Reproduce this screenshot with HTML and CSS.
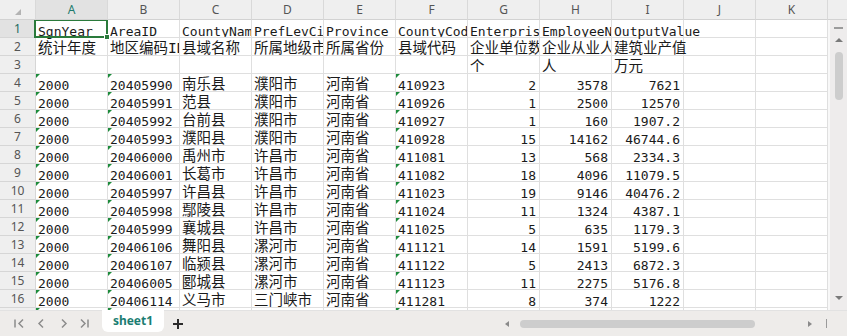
FILE: index.html
```html
<!DOCTYPE html>
<html>
<head>
  <meta charset="utf-8">
  <title>sheet1</title>
  <link rel="stylesheet" href="styles.css">
</head>
<body>
  <div class="book">
    <div class="colheads">
      <div class="corner"></div>
      <div class="ch sel">A</div><div class="ch">B</div><div class="ch">C</div><div class="ch">D</div>
      <div class="ch">E</div><div class="ch">F</div><div class="ch">G</div><div class="ch">H</div>
      <div class="ch">I</div><div class="ch">J</div><div class="ch">K</div>
      <div class="ch-end"></div>
    </div>

    <div class="body">
      <div class="sheet">
        <div class="row">
          <div class="rh sel">1</div>
          <div class="c cur">SgnYear<span class="handle"></span></div><div class="c">AreaID</div><div class="c">CountyName</div>
          <div class="c">PrefLevCity</div><div class="c">Province</div><div class="c">CountyCode</div>
          <div class="c">EnterpriseNum</div><div class="c">EmployeeNum</div><div class="c ov">OutputValue</div>
          <div class="c"></div><div class="c"></div>
        </div>
        <div class="row">
          <div class="rh">2</div>
          <div class="c zh">统计年度</div><div class="c zh">地区编码ID</div><div class="c zh">县域名称</div>
          <div class="c zh">所属地级市</div><div class="c zh">所属省份</div><div class="c zh">县域代码</div>
          <div class="c zh">企业单位数</div><div class="c zh">企业从业人数</div><div class="c zh ov">建筑业产值</div>
          <div class="c"></div><div class="c"></div>
        </div>
        <div class="row">
          <div class="rh">3</div>
          <div class="c"></div><div class="c"></div><div class="c"></div><div class="c"></div><div class="c"></div><div class="c"></div>
          <div class="c zh">个</div><div class="c zh">人</div><div class="c zh">万元</div>
          <div class="c"></div><div class="c"></div>
        </div>
        <div class="row">
          <div class="rh">4</div>
          <div class="c t">2000</div><div class="c t">20405990</div><div class="c zh">南乐县</div><div class="c zh">濮阳市</div>
          <div class="c zh">河南省</div><div class="c t">410923</div><div class="c n">2</div><div class="c n">3578</div>
          <div class="c n">7621</div><div class="c"></div><div class="c"></div>
        </div>
        <div class="row">
          <div class="rh">5</div>
          <div class="c t">2000</div><div class="c t">20405991</div><div class="c zh">范县</div><div class="c zh">濮阳市</div>
          <div class="c zh">河南省</div><div class="c t">410926</div><div class="c n">1</div><div class="c n">2500</div>
          <div class="c n">12570</div><div class="c"></div><div class="c"></div>
        </div>
        <div class="row">
          <div class="rh">6</div>
          <div class="c t">2000</div><div class="c t">20405992</div><div class="c zh">台前县</div><div class="c zh">濮阳市</div>
          <div class="c zh">河南省</div><div class="c t">410927</div><div class="c n">1</div><div class="c n">160</div>
          <div class="c n">1907.2</div><div class="c"></div><div class="c"></div>
        </div>
        <div class="row">
          <div class="rh">7</div>
          <div class="c t">2000</div><div class="c t">20405993</div><div class="c zh">濮阳县</div><div class="c zh">濮阳市</div>
          <div class="c zh">河南省</div><div class="c t">410928</div><div class="c n">15</div><div class="c n">14162</div>
          <div class="c n">46744.6</div><div class="c"></div><div class="c"></div>
        </div>
        <div class="row">
          <div class="rh">8</div>
          <div class="c t">2000</div><div class="c t">20406000</div><div class="c zh">禹州市</div><div class="c zh">许昌市</div>
          <div class="c zh">河南省</div><div class="c t">411081</div><div class="c n">13</div><div class="c n">568</div>
          <div class="c n">2334.3</div><div class="c"></div><div class="c"></div>
        </div>
        <div class="row">
          <div class="rh">9</div>
          <div class="c t">2000</div><div class="c t">20406001</div><div class="c zh">长葛市</div><div class="c zh">许昌市</div>
          <div class="c zh">河南省</div><div class="c t">411082</div><div class="c n">18</div><div class="c n">4096</div>
          <div class="c n">11079.5</div><div class="c"></div><div class="c"></div>
        </div>
        <div class="row">
          <div class="rh">10</div>
          <div class="c t">2000</div><div class="c t">20405997</div><div class="c zh">许昌县</div><div class="c zh">许昌市</div>
          <div class="c zh">河南省</div><div class="c t">411023</div><div class="c n">19</div><div class="c n">9146</div>
          <div class="c n">40476.2</div><div class="c"></div><div class="c"></div>
        </div>
        <div class="row">
          <div class="rh">11</div>
          <div class="c t">2000</div><div class="c t">20405998</div><div class="c zh">鄢陵县</div><div class="c zh">许昌市</div>
          <div class="c zh">河南省</div><div class="c t">411024</div><div class="c n">11</div><div class="c n">1324</div>
          <div class="c n">4387.1</div><div class="c"></div><div class="c"></div>
        </div>
        <div class="row">
          <div class="rh">12</div>
          <div class="c t">2000</div><div class="c t">20405999</div><div class="c zh">襄城县</div><div class="c zh">许昌市</div>
          <div class="c zh">河南省</div><div class="c t">411025</div><div class="c n">5</div><div class="c n">635</div>
          <div class="c n">1179.3</div><div class="c"></div><div class="c"></div>
        </div>
        <div class="row">
          <div class="rh">13</div>
          <div class="c t">2000</div><div class="c t">20406106</div><div class="c zh">舞阳县</div><div class="c zh">漯河市</div>
          <div class="c zh">河南省</div><div class="c t">411121</div><div class="c n">14</div><div class="c n">1591</div>
          <div class="c n">5199.6</div><div class="c"></div><div class="c"></div>
        </div>
        <div class="row">
          <div class="rh">14</div>
          <div class="c t">2000</div><div class="c t">20406107</div><div class="c zh">临颍县</div><div class="c zh">漯河市</div>
          <div class="c zh">河南省</div><div class="c t">411122</div><div class="c n">5</div><div class="c n">2413</div>
          <div class="c n">6872.3</div><div class="c"></div><div class="c"></div>
        </div>
        <div class="row">
          <div class="rh">15</div>
          <div class="c t">2000</div><div class="c t">20406005</div><div class="c zh">郾城县</div><div class="c zh">漯河市</div>
          <div class="c zh">河南省</div><div class="c t">411123</div><div class="c n">11</div><div class="c n">2275</div>
          <div class="c n">5176.8</div><div class="c"></div><div class="c"></div>
        </div>
        <div class="row">
          <div class="rh">16</div>
          <div class="c t">2000</div><div class="c t">20406114</div><div class="c zh">义马市</div><div class="c zh">三门峡市</div>
          <div class="c zh">河南省</div><div class="c t">411281</div><div class="c n">8</div><div class="c n">374</div>
          <div class="c n">1222</div><div class="c"></div><div class="c"></div>
        </div>
        <div class="row">
          <div class="rh">17</div>
          <div class="c t"></div><div class="c t"></div><div class="c"></div><div class="c"></div>
          <div class="c"></div><div class="c t"></div><div class="c"></div><div class="c"></div>
          <div class="c"></div><div class="c"></div><div class="c"></div>
        </div>
      </div>

      <div class="vscroll">
        <span class="split"></span>
        <span class="arrow-up"></span>
        <span class="vthumb"></span>
        <span class="arrow-down"></span>
      </div>
    </div>

    <div class="tabbar">
      <svg class="nav" width="100" height="25" viewBox="0 0 100 25">
        <g fill="none" stroke="#8c8c8c" stroke-width="1.5">
          <path d="M15 8.5V16.5M23 8.5L19 12.5L23 16.5"/>
          <path d="M43 8.5L39 12.5L43 16.5"/>
          <path d="M62 8.5L66 12.5L62 16.5"/>
          <path d="M81 8.5L85 12.5L81 16.5M88 8.5V16.5"/>
        </g>
      </svg>
      <div class="tab">sheet1</div>
      <svg class="add" width="12" height="12" viewBox="0 0 12 12">
        <path d="M6 1V11M1 6H11" stroke="#2b2b2b" stroke-width="2"/>
      </svg>
      <div class="hscroll">
        <span class="arrow-left"></span>
        <span class="hthumb"></span>
        <span class="arrow-right"></span>
        <span class="bar"></span>
      </div>
    </div>
  </div>
</body>
</html>
```

FILE: styles.css
```css
body {
  margin: 0;
  font-family: "Noto Sans", sans-serif;
  background: #fff;
  overflow: hidden;
}

.book {
  width: 847px;
  height: 336px;
  display: flex;
  flex-direction: column;
}

/* column letters */
.colheads {
  display: grid;
  grid-template-columns: 36px repeat(11, 72px) 19px;
  height: 20px;
  background: #efefef;
}

.colheads > div {
  box-sizing: border-box;
  border-right: 1px solid #d9d9d9;
  border-bottom: 1px solid #d2d2d2;
  text-align: center;
  font-size: 12px;
  line-height: 19px;
  color: #555;
}

.colheads .ch-end {
  border-right: none;
}

.colheads .sel {
  background: #e2e2e2;
  color: #1d7b6c;
}

.corner {
  position: relative;
}

.corner::after {
  content: "";
  position: absolute;
  left: 15px;
  top: 9px;
  border-left: 6px solid transparent;
  border-bottom: 6px solid #b3b3b3;
}

/* grid */
.body {
  display: flex;
  height: 290px;
}

.sheet {
  width: 828px;
  overflow: hidden;
}

.row {
  display: grid;
  grid-template-columns: 36px repeat(11, 72px);
  height: 18px;
}

.row > div {
  box-sizing: border-box;
  height: 18px;
  border-right: 1px solid #dfdfdf;
  border-bottom: 1px solid #dfdfdf;
}

.rh {
  background: #efefef;
  text-align: center;
  font-size: 12px;
  line-height: 17px;
  color: #555;
}

.row > .rh {
  border-color: #d6d6d6;
}

.rh.sel {
  background: #e2e2e2;
  color: #1d6b60;
}

.c {
  position: relative;
  overflow: hidden;
  white-space: nowrap;
  padding: 3px 3px 0 2px;
  font-family: "DejaVu Sans Mono", "Noto Sans CJK SC", monospace;
  font-size: 13px;
  line-height: 18px;
  color: #1a1a1a;
}

.c.zh {
  font-size: 14.5px;
  padding-top: 1px;
}

.c.n {
  text-align: right;
}

.c.ov,
.c.cur {
  overflow: visible;
}

/* number stored as text */
.c.t::before {
  content: "";
  position: absolute;
  left: 0;
  top: 0;
  border-top: 4px solid #1c8b3b;
  border-right: 4px solid transparent;
}

/* active cell */
.c.cur::after {
  content: "";
  position: absolute;
  left: -2px;
  top: -1px;
  right: -1px;
  bottom: -1px;
  border: 2px solid #2a7a3b;
}

.handle {
  position: absolute;
  right: -3px;
  bottom: -3px;
  width: 6px;
  height: 6px;
  box-sizing: border-box;
  background: #2a7a3b;
  border: 1px solid #fff;
  z-index: 1;
}

/* vertical scrollbar */
.vscroll {
  width: 19px;
  box-sizing: border-box;
  border-left: 2px solid #f8f8f8;
  background: #eeecec;
  display: flex;
  flex-direction: column;
  align-items: center;
  padding-top: 7px;
}

.split {
  width: 9px;
  height: 2px;
  background: #9b9b9b;
}

.arrow-up {
  margin-top: 9px;
  border-left: 4px solid transparent;
  border-right: 4px solid transparent;
  border-bottom: 4px solid #7a7a7a;
}

.vthumb {
  margin-top: 10px;
  width: 8px;
  height: 48px;
  border-radius: 4px;
  background: #cdcdcd;
}

.arrow-down {
  margin-top: auto;
  margin-bottom: 10px;
  border-left: 4px solid transparent;
  border-right: 4px solid transparent;
  border-top: 4px solid #7a7a7a;
}

/* sheet tabs */
.tabbar {
  display: flex;
  align-items: flex-start;
  height: 26px;
  box-sizing: border-box;
  border-top: 1px solid #e2e2e2;
  background: #eeecea;
}

.nav {
  display: block;
}

.tab {
  margin-left: 2px;
  width: 62px;
  height: 22px;
  margin-top: -1px;
  background: #fff;
  border-radius: 0 0 6px 6px;
  text-align: center;
  font-size: 12px;
  font-weight: bold;
  line-height: 22px;
  color: #1b7d72;
}

.add {
  margin-left: 8px;
  margin-top: 7px;
}

.hscroll {
  margin-left: auto;
  width: 347px;
  height: 25px;
  display: flex;
  align-items: center;
}

.arrow-left {
  margin-left: 5px;
  border-top: 3px solid transparent;
  border-bottom: 3px solid transparent;
  border-right: 4px solid #8a8a8a;
}

.hthumb {
  margin-left: 11px;
  width: 235px;
  height: 8px;
  border-radius: 4px;
  background: #cdcdcd;
}

.arrow-right {
  margin-left: 53px;
  border-top: 3px solid transparent;
  border-bottom: 3px solid transparent;
  border-left: 4px solid #8a8a8a;
}

.bar {
  margin-left: 14px;
  width: 1px;
  height: 9px;
  background: #9a9a9a;
}
```
